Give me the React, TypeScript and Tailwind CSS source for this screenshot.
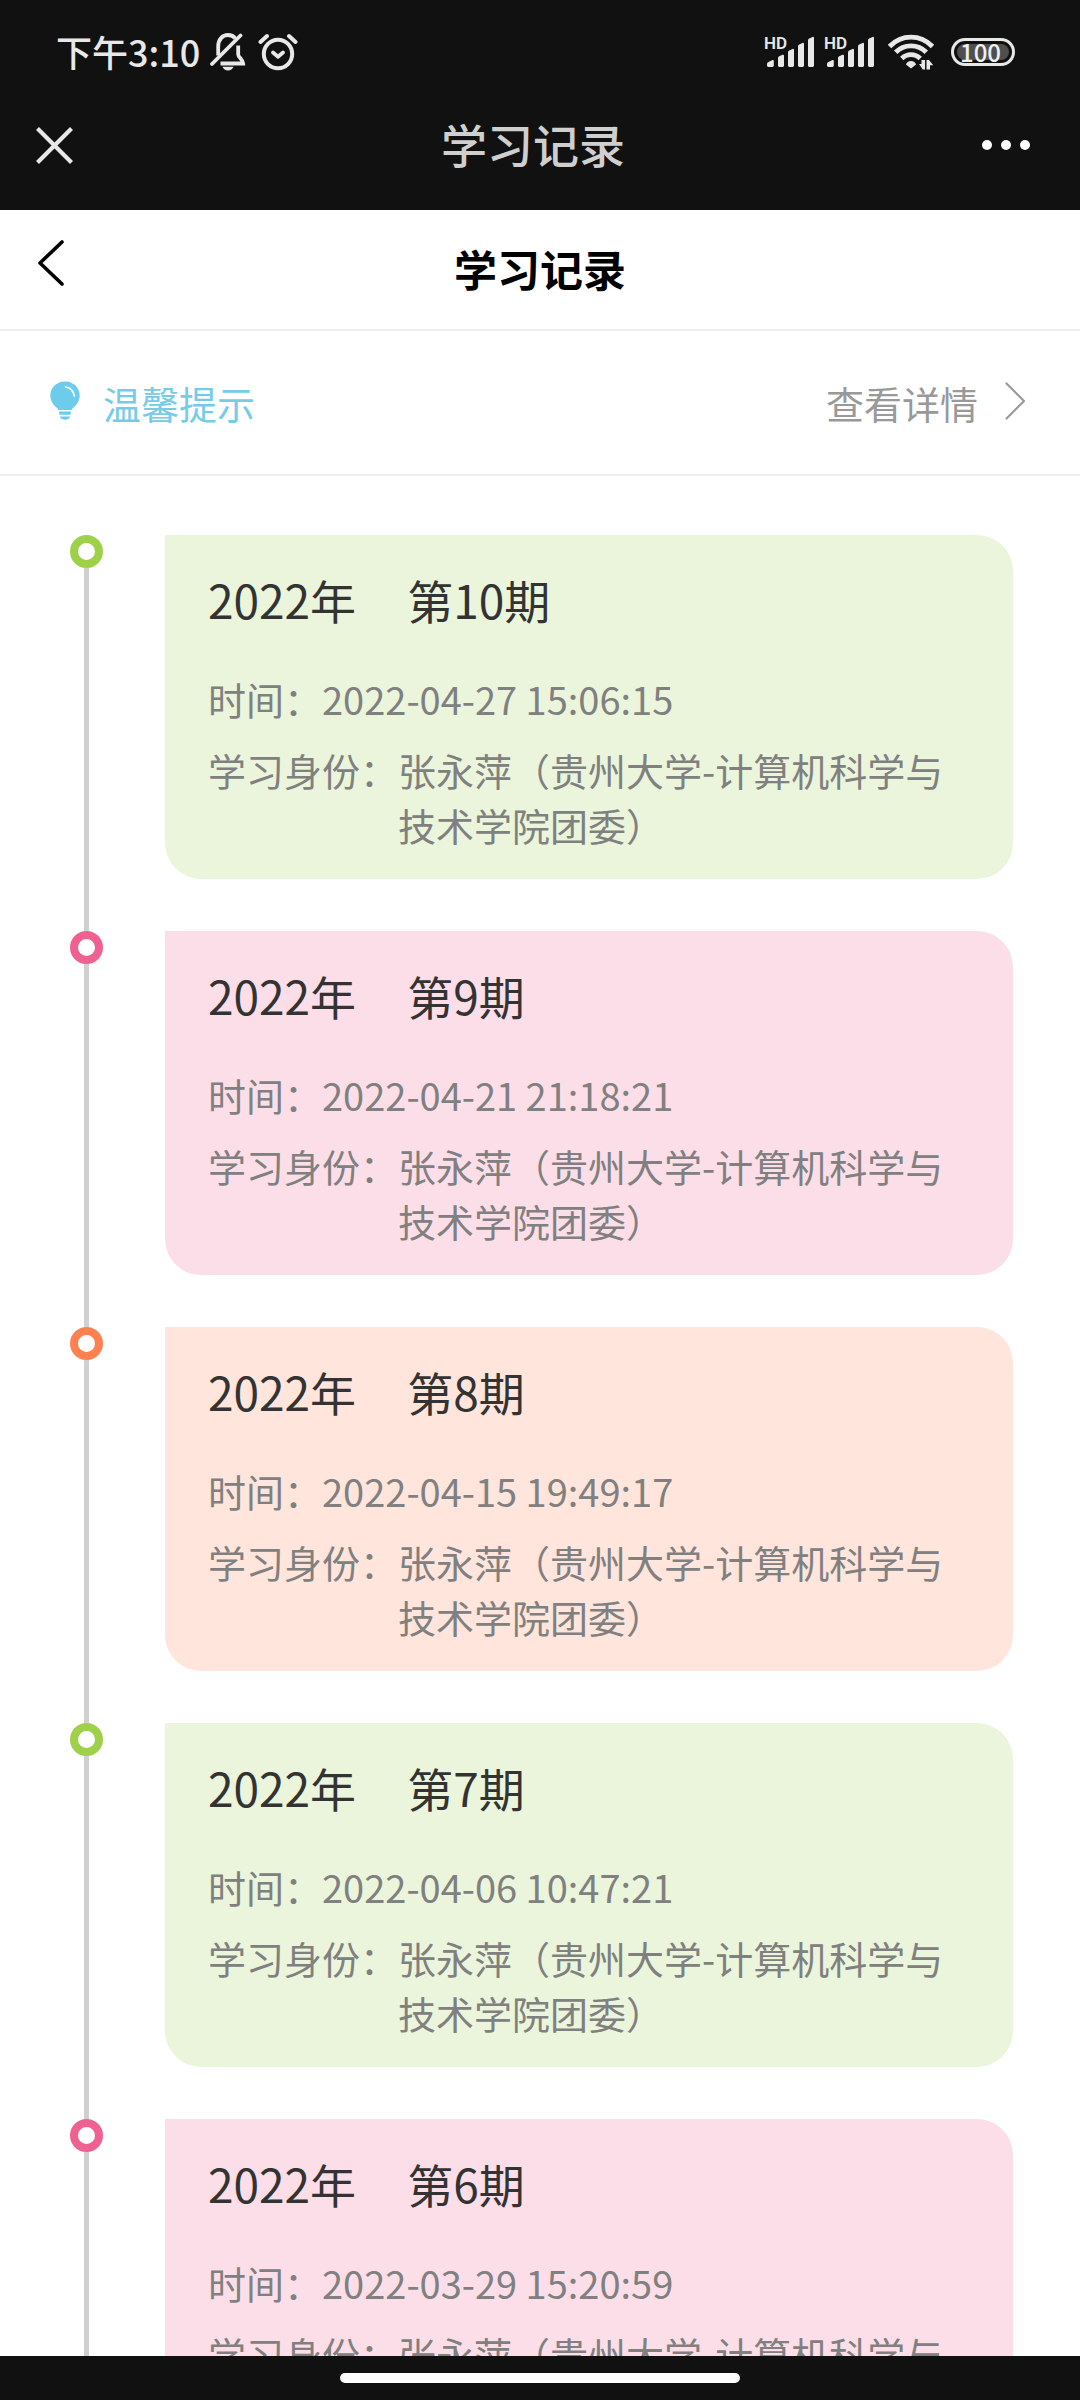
import React from "react";

type Tone = "green" | "pink" | "orange";

interface StudyRecord {
  year: string;
  issue: string;
  time: string;
  tone: Tone;
}

const MEMBER = "张永萍（贵州大学-计算机科学与技术学院团委）";

const RECORDS: StudyRecord[] = [
  { year: "2022年", issue: "第10期", time: "2022-04-27 15:06:15", tone: "green" },
  { year: "2022年", issue: "第9期", time: "2022-04-21 21:18:21", tone: "pink" },
  { year: "2022年", issue: "第8期", time: "2022-04-15 19:49:17", tone: "orange" },
  { year: "2022年", issue: "第7期", time: "2022-04-06 10:47:21", tone: "green" },
  { year: "2022年", issue: "第6期", time: "2022-03-29 15:20:59", tone: "pink" },
];

const RING: Record<Tone, string> = {
  green: "border-[#9ed04a]",
  pink: "border-[#ef6191]",
  orange: "border-[#ff814f]",
};

const CARD: Record<Tone, string> = {
  green: "bg-[#eaf5db]",
  pink: "bg-[#fcdee8]",
  orange: "bg-[#ffe5db]",
};

function MutedBellIcon() {
  return (
    <svg width="36" height="38" viewBox="0 0 36 38" fill="none" stroke="#e8e8e8" strokeWidth="3.8" aria-hidden="true">
      <path d="M8.200 22.500V13.500C8.200 6.500 12.500 2 18 2c3 0 5.600 1.200 7.200 3.400" />
      <path d="M28.200 12.500v9c0 2.500 4.800 5.500 5 9H10.500" />
      <path d="M2 31L30.500 2.500" strokeLinecap="round" />
      <path d="M12.500 33.700h11c-.8 2.400-3 3.800-5.500 3.800s-4.700-1.400-5.500-3.800z" fill="#e8e8e8" stroke="none" />
    </svg>
  );
}

function AlarmIcon() {
  return (
    <svg width="40" height="38" viewBox="0 0 40 38" fill="none" stroke="#e8e8e8" aria-hidden="true">
      <circle cx="20" cy="21" r="14.200" strokeWidth="4" />
      <path d="M15 19.500l5 4.200 5-4.200" strokeWidth="3.800" strokeLinecap="round" strokeLinejoin="round" />
      <path d="M2.500 9L9 3M37.500 9L31 3" strokeWidth="4" strokeLinecap="round" />
    </svg>
  );
}

function SignalIcon() {
  return (
    <span className="relative block h-8 w-[50px]">
      <span className="absolute -top-[2px] -left-px font-['Roboto',sans-serif] text-[17px] leading-[18px] font-semibold text-[#e8e8e8]">HD</span>
      <svg className="block" width="50" height="32" viewBox="0 0 50 32" fill="#e8e8e8" aria-hidden="true">
        <path d="M2 28q0-1.500 1.500-2l4-1.900q1.300-.4 1.300 1V29.600q0 1.400-1.400 1.400h-4q-1.400 0-1.400-1.400z" />
        <path d="M13 22q0-1.300 1.200-1.700l3.300-1.600q1.500-.3 1.500 1V29.600q0 1.400-1.400 1.400h-3.200q-1.400 0-1.400-1.400z" />
        <path d="M23 16.500q0-1.300 1.200-1.900l3.300-1.700q1.500-.3 1.500 1V29.600q0 1.400-1.400 1.400h-3.200q-1.400 0-1.400-1.400z" />
        <path d="M33 10.500q0-1.300 1.200-1.900l3.300-1.700q1.500-.3 1.500 1V29.600q0 1.400-1.400 1.400h-3.200q-1.400 0-1.400-1.400z" />
        <path d="M43 4.500q0-1.300 1.200-1.900l3.300-1.700q1.500-.3 1.500 1V29.600q0 1.400-1.400 1.400h-3.200q-1.400 0-1.400-1.400z" />
      </svg>
    </span>
  );
}

function WifiIcon() {
  return (
    <svg width="46" height="36" viewBox="0 0 46 36" fill="none" stroke="#e8e8e8" strokeWidth="4.800" aria-hidden="true">
      <path d="M1.500 12.500C13.500 0 32.500 0 44.500 12.500" />
      <path d="M7.700 18.200C16 9.700 30 9.700 38.300 18.200" />
      <path d="M13.800 24.500C18.900 19.400 27.100 19.400 32.200 24.500" />
      <path d="M18 30.500q1-3.500 5-3.500t5 3.500l-5 4z" fill="#e8e8e8" stroke="none" />
      <path d="M31 30h2.500v-4H37v9.500h-2.200zM38.500 26h2.400l4.400 5.200H42V35.500h-3.500z" fill="#e8e8e8" stroke="none" />
    </svg>
  );
}

function StatusBar() {
  return (
    <div className="flex h-20 items-center justify-between pt-6 pr-[65px] pl-14">
      <div className="flex items-center">
        <span className="pb-[2px] text-[36px] leading-[54px] font-medium text-[#e8e8e8]">下午3:10</span>
        <span className="ml-[10px]">
          <MutedBellIcon />
        </span>
        <span className="ml-3">
          <AlarmIcon />
        </span>
      </div>
      <div className="flex items-center">
        <SignalIcon />
        <span className="ml-[10px]">
          <SignalIcon />
        </span>
        <span className="ml-[13px]">
          <WifiIcon />
        </span>
        <span className="ml-[17px] flex h-7 w-16 items-center rounded-full border-[3px] border-[#e8e8e8] p-[3px]">
          <span className="flex h-4 w-full items-center rounded-full bg-[#4f4f4f] pl-[3px] text-[24px] leading-none font-medium text-[#f0f0f0]">
            100
          </span>
        </span>
      </div>
    </div>
  );
}

function AppBar() {
  return (
    <div className="grid h-[130px] grid-cols-[1fr_auto_1fr] items-center pr-[50px] pl-9">
      <button type="button" aria-label="关闭" className="justify-self-start">
        <svg width="37" height="37" viewBox="0 0 37 37" stroke="#e8e8e8" strokeWidth="4.200" aria-hidden="true">
          <path d="M1.500 1.500l34 34M35.500 1.500l-34 34" />
        </svg>
      </button>
      <span className="pb-1 text-[46px] leading-[60px] font-medium text-[#cfcfcf]">学习记录</span>
      <button type="button" aria-label="更多" className="flex gap-[9px] justify-self-end">
        <span className="size-[10px] rounded-full bg-white" />
        <span className="size-[10px] rounded-full bg-white" />
        <span className="size-[10px] rounded-full bg-white" />
      </button>
    </div>
  );
}

function PageHeader() {
  return (
    <header className="grid grid-cols-[1fr_auto_1fr] items-center border-b-2 border-[#ededed] px-[37px] pt-[29px] pb-[31px]">
      <button type="button" aria-label="返回" className="-mt-3 justify-self-start">
        <svg width="28" height="46" viewBox="0 0 28 46" fill="none" stroke="#000" strokeWidth="3.600" strokeLinecap="round" strokeLinejoin="round" aria-hidden="true">
          <path d="M25 2L3 23l22 21" />
        </svg>
      </button>
      <h1 className="text-[43px] leading-[59px] font-bold text-black">学习记录</h1>
    </header>
  );
}

function TipRow() {
  return (
    <section className="flex items-center justify-between border-b-2 border-[#ededed] py-11 pr-[55px] pl-[50px]">
      <div className="flex items-center gap-[23px]">
        <svg className="-mt-1" width="30" height="39" viewBox="0 0 30 39" aria-hidden="true">
          <path d="M15 .5C6.500.5.300 6.800.300 14.500c0 5 2.500 8.700 5.600 11.500 1.300 1.200 2.200 1.700 2.300 3h13.600c.1-1.300 1-1.800 2.300-3 3.100-2.800 5.600-6.500 5.600-11.500C29.700 6.800 23.500.5 15 .5z" fill="#6dcbec" />
          <path d="M15.500 6c4.300.2 8.200 4 8.800 9" fill="none" stroke="#fff" strokeWidth="1.700" strokeLinecap="round" />
          <path d="M9 30.600h12l-.5 3.200H9.500zM9.800 35.500h10.400c-.6 2-2.500 3.300-5.200 3.300s-4.600-1.300-5.200-3.300z" fill="#6dcbec" />
        </svg>
        <span className="text-[38px] leading-[55px] text-[#76cbe8]">温馨提示</span>
      </div>
      <a href="#detail" className="flex items-center gap-[27px] text-[38px] leading-[55px] text-[#999999]">
        查看详情
        <svg className="-mt-1" width="20" height="38" viewBox="0 0 20 38" fill="none" stroke="#999" strokeWidth="2.200" strokeLinecap="round" strokeLinejoin="round" aria-hidden="true">
          <path d="M1.500 1.500L19 19 1.500 36.500" />
        </svg>
      </a>
    </section>
  );
}

function RecordItem({ record }: { record: StudyRecord }) {
  return (
    <li className="flex">
      <div className="flex w-[33px] shrink-0 flex-col items-center">
        <span className={`size-[33px] rounded-full border-8 bg-white ${RING[record.tone]}`} />
        <span className="w-[5px] flex-1 bg-[#d0d0d0]" />
      </div>
      <div className="ml-[62px] flex-1 pb-[52px]">
        <article className={`rounded-[36px] rounded-tl-none px-[43px] pt-[34px] pb-[27px] ${CARD[record.tone]}`}>
          <h2 className="flex gap-[51px] text-[46px] leading-[60px] text-[#333333]">
            <span>{record.year}</span>
            <span>{record.issue}</span>
          </h2>
          <dl className="mt-[42px] flex flex-col gap-4 text-[38px] leading-[55px] text-[#808080]">
            <div className="flex">
              <dt className="shrink-0">时间：</dt>
              <dd>{record.time}</dd>
            </div>
            <div className="flex">
              <dt className="shrink-0">学习身份：</dt>
              <dd>{MEMBER}</dd>
            </div>
          </dl>
        </article>
      </div>
    </li>
  );
}

export default function App() {
  return (
    <div className="flex h-screen flex-col bg-white font-['Noto_Sans_CJK_SC',sans-serif]" lang="zh-CN">
      <div className="shrink-0 bg-[#111111]">
        <StatusBar />
        <AppBar />
      </div>
      <PageHeader />
      <TipRow />
      <main className="min-h-0 flex-1 overflow-y-auto pt-[59px] pr-[67px] pl-[70px] [scrollbar-width:none]">
        <ol>
          {RECORDS.map((record) => (
            <RecordItem key={record.issue} record={record} />
          ))}
        </ol>
      </main>
      <footer className="flex h-11 shrink-0 items-center justify-center bg-[#111111]">
        <span className="h-[10px] w-[37%] rounded-full bg-white" />
      </footer>
    </div>
  );
}
